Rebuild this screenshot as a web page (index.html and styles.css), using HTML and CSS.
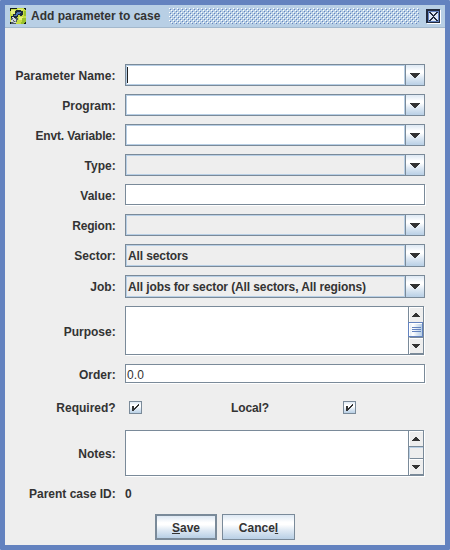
FILE: index.html
```html
<!DOCTYPE html>
<html lang="en">
<head>
<meta charset="utf-8">
<title>Add parameter to case</title>
<link rel="stylesheet" href="styles.css">
</head>
<body>
<svg width="0" height="0" class="defs">
  <symbol id="down" viewBox="0 0 10 5"><path d="M0 0h10v1H9v1H8v1H7v1H6v1H4V4H3V3H2V2H1V1H0z"/></symbol>
  <symbol id="sdown" viewBox="0 0 8 4"><path d="M0 0h8v1H7v1H6v1H5v1H3V3H2V2H1V1H0z"/></symbol>
  <symbol id="sup" viewBox="0 0 8 4"><path d="M3 0h2v1h1v1h1v1h1v1H0V3h1V2h1V1h1z"/></symbol>
  <symbol id="check" viewBox="0 0 13 13"><path d="M3 5h2v5H3zM9 3h1v2H9zM8 4h1v2H8zM7 5h1v2H7zM6 6h1v2H6zM5 7h1v2H5z"/></symbol>
</svg>
<div class="window">
  <header class="titlebar">
    <svg class="app" viewBox="0 0 16 16">
      <path fill="#c6dd45" d="M0 0h16v16H0z"/>
      <path fill="#e6f07c" d="M1 2h4v4H1zM9 9h4v3H9zM8 1h5v1H8z"/>
      <path fill="#98c02c" d="M12 10h4v6h-5v-2h1zM14 3h2v5h-2z"/>
      <path fill="#10191c" d="M0 0h7v1H1v2H0zM0 14h1v2H0zM14 0h2v2h-1V1h-1zM15 14h1v2h-2v-1h1z"/>
      <path fill="#1c2a38" d="M6 2h5v1h2v4h-1v1h-2V7H8v2H7v1H1V8h2V6h2V4H5V3h1z"/>
      <path fill="#4a73b4" d="M7 4h4v1h-1v1H8v1H7v1H4V7h2V5h1z"/>
      <path fill="#4d5a64" d="M1 10h7v2H7v2H6v2H1z"/>
      <path fill="#d4d9dc" d="M3 10h2v1h1v2H4v-1H3zM1 12h2v2H1zM4 14h2v1H4zM2 9h2v1H2z"/>
      <path fill="#99a4ab" d="M2 11h1v1H2zM3 13h1v2H3zM5 13h1v1H5z"/>
    </svg>
    <h1>Add parameter to case</h1>
    <div class="bumps"></div>
    <svg class="close" viewBox="0 0 16 16">
      <path fill="#fff" d="M1 1h14v14H1z"/>
      <path fill="#222a3c" d="M0 0h14v14H0z"/>
      <path fill="#6382bf" d="M1 1h13v13H1z"/>
      <path fill="#222a3c" d="M1 1h13v1H2v12H1zM13 2h1v12H2v-1h11z"/>
      <path fill="#dce7f5" d="M3 3h9v9H3z"/>
      <path fill="#222a3c" d="M3 3h2v1h1v1h1v1h1V5h1V4h1V3h2v1h-1v1h-1v1H9v1H8v1h1v1h1v1h1v1h1v1h-2v-1H9v-1H8V9H7v1H6v1H5v1H3v-1h1v-1h1V9h1V8h1V7H6V6H5V5H4V4H3z"/>
    </svg>
  </header>
  <main class="form">
    <label class="wide">Parameter Name:</label><div class="combo edit"><div class="val"><i class="caret"></i></div><div class="arrow"><svg><use href="#down"/></svg></div></div>
    <label>Program:</label><div class="combo edit"><div class="val"></div><div class="arrow"><svg><use href="#down"/></svg></div></div>
    <label class="tight">Envt. Variable:</label><div class="combo edit"><div class="val"></div><div class="arrow"><svg><use href="#down"/></svg></div></div>
    <label>Type:</label><div class="combo"><div class="val"></div><div class="arrow"><svg><use href="#down"/></svg></div></div>
    <label>Value:</label><div class="field"></div>
    <label class="tight">Region:</label><div class="combo"><div class="val"></div><div class="arrow"><svg><use href="#down"/></svg></div></div>
    <label>Sector:</label><div class="combo"><div class="val">All sectors</div><div class="arrow"><svg><use href="#down"/></svg></div></div>
    <label>Job:</label><div class="combo"><div class="val">All jobs for sector (All sectors, All regions)</div><div class="arrow"><svg><use href="#down"/></svg></div></div>
    <label>Purpose:</label>
    <div class="field area"><div class="scroll">
      <div class="sbtn"><svg><use href="#sup"/></svg></div>
      <div class="thumb"><i></i><i></i><i></i></div>
      <div class="sbtn low"><svg><use href="#sdown"/></svg></div>
    </div></div>
    <label>Order:</label><div class="field order">0.0</div>
    <label>Required?</label>
    <div class="checks"><span class="box"><svg><use href="#check"/></svg></span><span class="local">Local?</span><span class="box"><svg><use href="#check"/></svg></span></div>
    <label>Notes:</label>
    <div class="field area"><div class="scroll">
      <div class="sbtn"><svg><use href="#sup"/></svg></div>
      <div class="track"></div>
      <div class="sbtn low"><svg><use href="#sdown"/></svg></div>
    </div></div>
    <label>Parent case ID:</label><div class="plain">0</div>
  </main>
  <footer class="actions">
    <div class="btn save"><span><u>S</u>ave</span></div>
    <div class="btn cancel"><span>Cance<u>l</u></span></div>
  </footer>
</div>
</body>
</html>
```
FILE: styles.css
```css
* { box-sizing: border-box; }
body { margin: 0; font: bold 12px/14px "Liberation Sans", Arial, sans-serif; color: #333; background: #fff; }
.defs { position: absolute; }
svg { display: block; shape-rendering: crispEdges; fill: #333; }
.window { width: 450px; height: 550px; border: 5px solid #6382bf; border-radius: 1px; background: #eee; display: flex; flex-direction: column; }
.titlebar { height: 23px; flex: none; background: #b8cfe5; border-bottom: 1px solid #a3b8cc; display: flex; align-items: flex-start; padding: 3px 3px 0 5px; }
.app { width: 16px; height: 16px; }
h1 { font: inherit; line-height: 17px; margin: 0 0 0 5px; width: 138px; white-space: nowrap; flex: none; }
.bumps { width: 250px; height: 16px;
  background: conic-gradient(from 0deg at 1px 1px, transparent 0 75%, #fff 0) 0 0 / 4px 4px,
  conic-gradient(from 0deg at 1px 1px, transparent 0 75%, #6382bf 0) 1px 1px / 4px 4px,
  conic-gradient(from 0deg at 1px 1px, transparent 0 75%, #fff 0) 2px 2px / 4px 4px,
  conic-gradient(from 0deg at 1px 1px, transparent 0 75%, #6382bf 0) 3px 3px / 4px 4px; }
.close { width: 16px; height: 16px; margin: 1px 0 0 7px; }
.form { flex: none; margin-top: 36px; display: grid; grid-template-columns: 110.7px 301px; column-gap: 9.3px; row-gap: 8px;
  grid-template-rows: 22px 22px 22px 22px 22px 22px 23px 23px 50px 20px 30px 47px 17px; }
label { justify-self: end; align-self: center; white-space: nowrap; padding-top: 1px; }
.wide { letter-spacing: 0.1px; }
.tight { letter-spacing: -0.17px; }
.combo { width: 300px; border: 1px solid #7a8a99; display: flex; }
.val { flex: 1; border: 1px solid #b8cfe5; display: flex; align-items: center; padding-left: 1px; white-space: nowrap; letter-spacing: -0.11px; }
.edit .val { background: #fff; padding-left: 0; }
.caret { width: 1px; height: 16px; background: #222; }
.arrow { width: 19px; border-left: 1px solid #7a8a99; display: flex; justify-content: center; align-items: flex-start; background: linear-gradient(#dde8f3, #fff 30%, #fff 40%, #dde8f3 65%, #b8cfe5); }
.arrow svg { width: 10px; height: 5px; margin-top: 8px; }
.field { border: 1px solid #7a8a99; background: #fff; margin: 0 1px 1px 0; box-shadow: 1px 1px #fff; }
.area { margin-right: 2px; display: flex; justify-content: flex-end; }
.order { font-weight: normal; padding: 2px 0 0 1px; line-height: 16px; letter-spacing: 0.15px; }
.scroll { width: 15px; border-left: 1px solid #7a8a99; background: #eee; display: flex; flex-direction: column; }
.sbtn { height: 15px; flex: none; border: 1px solid #fff; border-width: 1px 0 0 1px; display: flex; justify-content: center; align-items: center; }
.low { height: 17px; border-top: 1px solid #7a8a99; box-shadow: inset 0 1px #fff, inset 0 -1px #7a8a99; }
.sbtn svg { width: 8px; height: 4px; }
.sbtn:first-child svg { margin-top: -1px; }
.thumb { height: 16px; margin-left: -1px; border: 1px solid #6382bf; background: linear-gradient(90deg, #dde8f3, #fff 30%, #dde8f3 60%, #b8cfe5); display: flex; flex-direction: column; gap: 1px; padding: 4px 1px 0 3px; box-shadow: inset 1px 1px #fff; }
.thumb i { height: 1px; background: #6382bf; }
.track { flex: 1; border-top: 1px solid #7a8a99; box-shadow: inset 1px 1px #b8cfe5; }
.checks { display: flex; align-items: center; padding-left: 4px; }
.box { width: 13px; height: 13px; margin-top: 1px; border: 1px solid #7a8a99; background: linear-gradient(#dde8f3, #fff 30%, #fff 40%, #dde8f3 65%, #b8cfe5); }
.box svg { width: 13px; height: 13px; margin: -1px; }
.local { width: 112px; margin: 0 0 0 89px; padding-top: 1px; letter-spacing: -0.1px; }
.plain { align-self: center; padding-top: 1px; }
.actions { display: flex; gap: 5px; margin: 12px 0 0 150px; }
.btn { height: 26px; border: 1px solid #7a8a99; display: flex; justify-content: center; align-items: center; background: linear-gradient(#dde8f3, #fff 30%, #fff 40%, #dde8f3 65%, #b8cfe5); padding-top: 1px; }
.save { width: 62px; border-width: 2px; }
.cancel { width: 73px; }
u { text-decoration: underline; text-underline-offset: 1px; text-decoration-thickness: 1px; text-decoration-skip-ink: none; }
```
